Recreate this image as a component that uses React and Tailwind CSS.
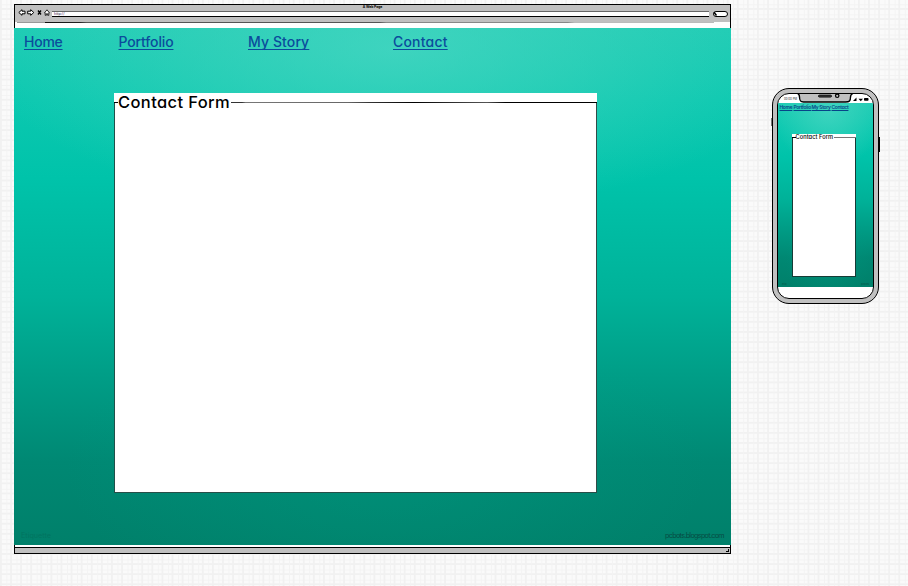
import React from "react";

const desktopLinks = [
  { label: "Home", cell: "w-[94.5px]", text: "tracking-[-0.25px]" },
  { label: "Portfolio", cell: "w-[129.5px]", text: "tracking-[-0.15px]" },
  { label: "My Story", cell: "w-[145px]", text: "tracking-[0.1px]" },
  { label: "Contact", cell: "w-[80px]", text: "tracking-[0.2px]" },
];

const phoneLinks = [
  { label: "Home", cell: "w-[14px]" },
  { label: "Portfolio", cell: "w-[18px]" },
  { label: "My Story", cell: "w-[20px]" },
  { label: "Contact", cell: "w-[18px]" },
];

const teal =
  "bg-[radial-gradient(ellipse_58%_32%_at_53%_4%,rgba(85,218,198,0.62)_0%,rgba(75,215,192,0.42)_45%,rgba(0,196,171,0)_100%),radial-gradient(ellipse_45%_30%_at_52%_85%,rgba(0,165,138,0.28),rgba(0,150,130,0)),linear-gradient(180deg,#1dcbb4_0%,#0bc8b0_14%,#00c3aa_29%,#00b299_52%,#009e87_67%,#008873_84%,#00806a_100%)]";

function BrowserIcons() {
  return (
    <svg width="34" height="9" viewBox="0 0 34 9" fill="#fff" stroke="#000" strokeWidth="1">
      <path d="M.8 4.5 4 1.7v1.5h3v2.6H4v1.5Z" />
      <path d="M15.8 4.5 12.7 1.7v1.5h-3v2.6h3v1.5Z" />
      <path d="m20 2.5 3 4M23 2.5l-3 4" strokeWidth="1.3" />
      <path d="M26.5 4.8 29 1.8l2.4 3h-.6v2.5h-1.1V5.8h-1.4v1.5h-1.1V4.8Z" strokeWidth=".8" />
    </svg>
  );
}

function BrowserWindow() {
  return (
    <section className="mt-1 ml-3.5 flex h-[550px] w-[717px] shrink-0 flex-col">
      <header className="flex h-6 flex-col border-x border-t border-black bg-white">
        <div className="h-[17px] bg-[#c0c0c0]">
          <div className="h-1.5 text-center text-[3.3px] leading-[5px] font-bold text-black">A Web Page</div>
          <div className="flex h-1.5">
            <div className="-mt-[3px] ml-[3px] w-[34px]">
              <BrowserIcons />
            </div>
            <div className="h-1.5 w-[657px] border-t border-b border-t-[#666] border-b-black bg-white pl-[2px] text-[3.6px] leading-[4px] font-medium text-[#523a68]">
              http://
            </div>
            <svg className="ml-1 h-1.5 w-[15px]" viewBox="0 0 15 6">
              <rect x=".5" y=".5" width="14" height="5" rx="2.5" fill="#fff" stroke="#000" />
              <path d="M1 1.3 3.5 4.5" stroke="#000" strokeWidth="1.5" />
            </svg>
          </div>
        </div>
        <div className="mr-4 ml-0.5 h-px bg-[linear-gradient(90deg,#999_0%,#999_4%,#111_4%,#222_9%,#555_10%,#555_52%,#888_53%,#888_79%,#bbb_80%)]" />
      </header>
      <main className={"flex h-[517px] flex-col " + teal}>
        <nav className="flex h-[65px] pt-1 pl-2.5 text-[14px] leading-5">
          {desktopLinks.map((l) => (
            <div key={l.label} className={"shrink-0 whitespace-nowrap " + l.cell}>
              <a className={"font-medium text-[#0b4c9c] underline decoration-1 underline-offset-2 [text-decoration-skip-ink:none] " + l.text}>{l.label}</a>
            </div>
          ))}
        </nav>
        <section className="ml-[100px] flex h-[400px] w-[483px] flex-col bg-white">
          <div className="flex h-[10px] items-end">
            <div className="h-px w-1 bg-black" />
            <h1 className="h-[10px] w-[113px] text-[16.5px] leading-[18px] font-medium tracking-[0.38px] whitespace-nowrap text-black">
              Contact Form
            </h1>
            <div className="h-px flex-1 bg-[linear-gradient(90deg,#333_0%,#333_3%,#777_4%,#666_32%,#333_38%,#000_50%,#555_70%,#000_75%)]" />
          </div>
          <div className="flex-1 border-x border-b border-l-[#205049] border-r-[#334b48] border-b-[#284e48]" />
        </section>
        <footer className="mt-auto flex justify-between px-[7px] pb-[4px] text-[7.2px] leading-[11px]">
          <span className="text-[#007460]">Etiquette</span>
          <span className="tracking-[-0.68px] text-[#064c43]">pcbots.blogspot.com</span>
        </footer>
      </main>
      <div className="flex h-[9px] flex-col border-r border-l border-black bg-white">
        <div className="mt-0.5 flex h-[7px] justify-end border-y border-black bg-[#c0c0c0]">
          <svg width="5" height="5" viewBox="0 0 5 5" stroke="#000">
            <path d="M1 3.5h3M3.5 1v3" />
          </svg>
        </div>
      </div>
    </section>
  );
}

function PhoneTop() {
  return (
    <svg className="absolute top-0 left-0" width="95" height="9" viewBox="0 0 95 9" fill="none" stroke="#000">
      <path d="M19-1c2 1 2.5 2 2.5 4 0 4 1 5 4 5h42c4 0 5-1 5-5 0-2 1-3 3-4Z" fill="#c0c0c0" strokeWidth="1.4" />
      <rect x="40.5" y="1.2" width="13" height="1.8" rx=".9" fill="#555" />
      <circle cx="59.2" cy="1.8" r="1.7" fill="#c0c0c0" strokeWidth="1.2" />
      <path d="m75 7 3.5-3.5V7Z" fill="#000" stroke="none" />
      <path d="M80.5 4.7h4.5l-2.2 2.6Z" fill="#000" stroke="none" />
      <rect x="86" y="4" width="4.5" height="2.8" rx=".8" fill="#000" stroke="none" />
    </svg>
  );
}

function Phone() {
  return (
    <section className="relative mt-[88px] ml-[41px] flex h-[216px] w-[107px] shrink-0 rounded-[17px] border-[1.5px] border-black bg-[#c0c0c0] p-[4px]">
      <i className="absolute top-[29px] -left-[2px] h-[8px] w-px bg-[#777]" />
      <i className="absolute top-[48px] -right-[2px] h-[15px] w-px bg-black" />
      <div className="relative flex flex-1 flex-col overflow-hidden rounded-[12px] border border-black bg-white">
        <div className="h-[9px] pt-[3px] pl-[6px] text-[2.8px] leading-[4px] text-[#222]">00:00 PM</div>
        <PhoneTop />
        <div className={"flex h-[184px] flex-col " + teal}>
          <nav className="flex h-[31px] pt-px pl-[1.5px] text-[4.9px] leading-[6px]">
            {phoneLinks.map((l) => (
              <div key={l.label} className={"shrink-0 whitespace-nowrap " + l.cell}>
                <a className="font-semibold tracking-[-0.28px] text-[#074488] underline decoration-[0.7px] underline-offset-[0.5px] [text-decoration-skip-ink:none]">{l.label}</a>
              </div>
            ))}
          </nav>
          <div className="ml-[14px] flex h-[143px] w-[64px] flex-col bg-white">
            <div className="flex h-[4px] items-end">
              <div className="h-px w-[3.5px] bg-black" />
              <h2 className="h-[4px] w-[38.5px] text-[5.7px] leading-[6px] font-medium tracking-[0.05px] whitespace-nowrap text-black">Contact Form</h2>
              <div className="h-px flex-1 bg-[#777]" />
            </div>
            <div className="flex-1 border-x border-b border-[#173b36]" />
          </div>
          <footer className="mt-auto flex justify-between px-1 text-[2.5px] leading-[5px] text-[#075448]">
            <span>Etiq</span>
            <span>pcbots</span>
          </footer>
        </div>
      </div>
    </section>
  );
}

export default function App() {
  return (
    <div className="flex h-[586px] w-[908px] items-start overflow-hidden bg-[#fafafa] bg-[linear-gradient(90deg,#f1f1f1_2px,transparent_2px,transparent_6px,#f3f3f3_6px,#f3f3f3_7px,transparent_7px),linear-gradient(180deg,#f1f1f1_2px,transparent_2px,transparent_6px,#f3f3f3_6px,#f3f3f3_7px,transparent_7px)] bg-[size:10.1px_10.1px] bg-position-[0px_8px] font-[Inter,sans-serif] [font-feature-settings:'cv11']">
      <BrowserWindow />
      <Phone />
    </div>
  );
}
